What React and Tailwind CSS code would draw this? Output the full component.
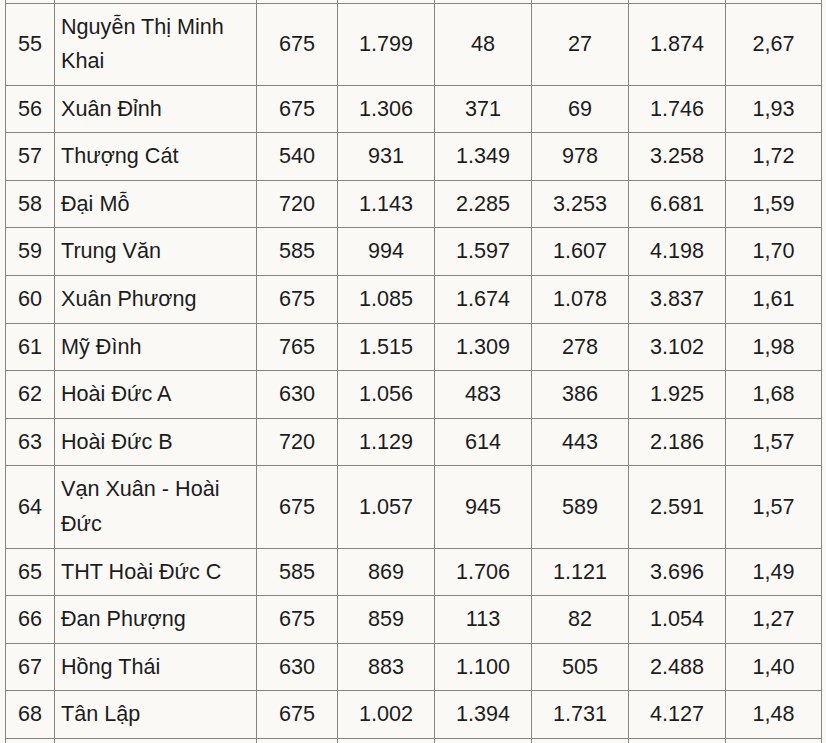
const ROWS = [
  ['55', 'Nguyễn Thị Minh Khai', '675', '1.799', '48', '27', '1.874', '2,67'],
  ['56', 'Xuân Đỉnh', '675', '1.306', '371', '69', '1.746', '1,93'],
  ['57', 'Thượng Cát', '540', '931', '1.349', '978', '3.258', '1,72'],
  ['58', 'Đại Mỗ', '720', '1.143', '2.285', '3.253', '6.681', '1,59'],
  ['59', 'Trung Văn', '585', '994', '1.597', '1.607', '4.198', '1,70'],
  ['60', 'Xuân Phương', '675', '1.085', '1.674', '1.078', '3.837', '1,61'],
  ['61', 'Mỹ Đình', '765', '1.515', '1.309', '278', '3.102', '1,98'],
  ['62', 'Hoài Đức A', '630', '1.056', '483', '386', '1.925', '1,68'],
  ['63', 'Hoài Đức B', '720', '1.129', '614', '443', '2.186', '1,57'],
  ['64', 'Vạn Xuân - Hoài Đức', '675', '1.057', '945', '589', '2.591', '1,57'],
  ['65', 'THT Hoài Đức C', '585', '869', '1.706', '1.121', '3.696', '1,49'],
  ['66', 'Đan Phượng', '675', '859', '113', '82', '1.054', '1,27'],
  ['67', 'Hồng Thái', '630', '883', '1.100', '505', '2.488', '1,40'],
  ['68', 'Tân Lập', '675', '1.002', '1.394', '1.731', '4.127', '1,48'],
];

const COLS = ['w-[49px]', 'w-[202px]', 'w-[81px]', 'w-[97px]', 'w-[97px]', 'w-[97px]', 'w-[97px]', 'w-[96px]'];

function Cell({ i, children }) {
  return (
    <td
      className={
        i === 1
          ? 'border border-[#858585] px-[6px] py-[6px] text-left align-middle'
          : 'border border-[#858585] px-[4px] py-[6px] text-center align-middle'
      }
    >
      {children}
    </td>
  );
}

export default function App() {
  return (
    <div
      className="h-[743px] w-[826px] overflow-hidden bg-[#faf9f6] pl-[5px] text-[21.6px] leading-[34.6px] text-[#1c1c1c]"
      style={{ fontFamily: '"Liberation Sans", Arial, sans-serif' }}
    >
      <table className="w-[817px] table-fixed border-collapse">
        <colgroup>
          {COLS.map((w, i) => (
            <col key={i} className={w} />
          ))}
        </colgroup>
        <tbody>
          {/* tail of the row above, scrolled out of view */}
          <tr>
            {COLS.map((_, i) => (
              <td key={i} className="h-[3px] border-x border-[#858585] p-0" />
            ))}
          </tr>
          {ROWS.map((row) => (
            <tr key={row[0]}>
              {row.map((v, i) => (
                <Cell key={i} i={i}>
                  {v}
                </Cell>
              ))}
            </tr>
          ))}
          {/* next row, cut off by the window */}
          <tr>
            {COLS.map((_, i) => (
              <td key={i} className="h-[47px] border border-[#858585] p-0" />
            ))}
          </tr>
        </tbody>
      </table>
    </div>
  );
}
